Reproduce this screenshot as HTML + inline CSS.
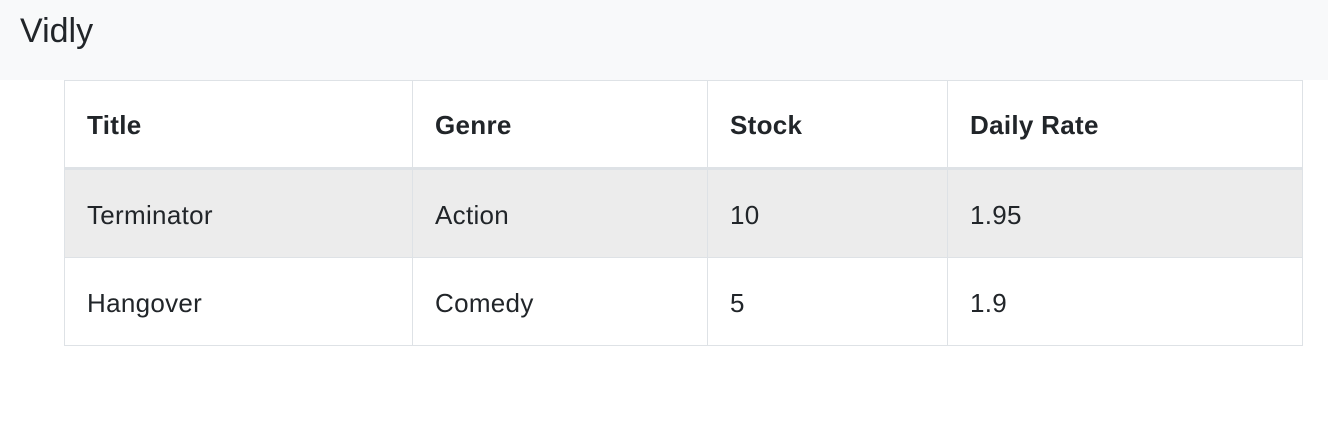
<!DOCTYPE html>
<html><head><style>
html,body{margin:0;padding:0;background:#fff;width:1328px;height:442px;overflow:hidden;font-family:"Liberation Sans",sans-serif;color:#212529}
.nav{position:absolute;left:0;top:0;width:1328px;height:80px;background:#f8f9fa}
.nav span{position:absolute;left:20px;top:12px;font-size:34px}
table{position:absolute;left:64px;top:80px;border-collapse:collapse;font-size:26px;letter-spacing:0.3px}
td,th{border:1px solid #dee2e6;padding:3px 0 0 22px;height:84px;text-align:left;vertical-align:middle}
th{font-weight:bold;border-bottom:3px solid #dee2e6;height:83px}
tr.g td{background:#ececec}
</style></head><body>
<div class="nav"><span>Vidly</span></div>
<table>
<colgroup><col style="width:348px"><col style="width:295px"><col style="width:240px"><col style="width:355px"></colgroup>
<tr><th>Title</th><th>Genre</th><th>Stock</th><th>Daily Rate</th></tr>
<tr class="g"><td>Terminator</td><td>Action</td><td>10</td><td>1.95</td></tr>
<tr><td>Hangover</td><td>Comedy</td><td>5</td><td>1.9</td></tr>
</table>
</body></html>
